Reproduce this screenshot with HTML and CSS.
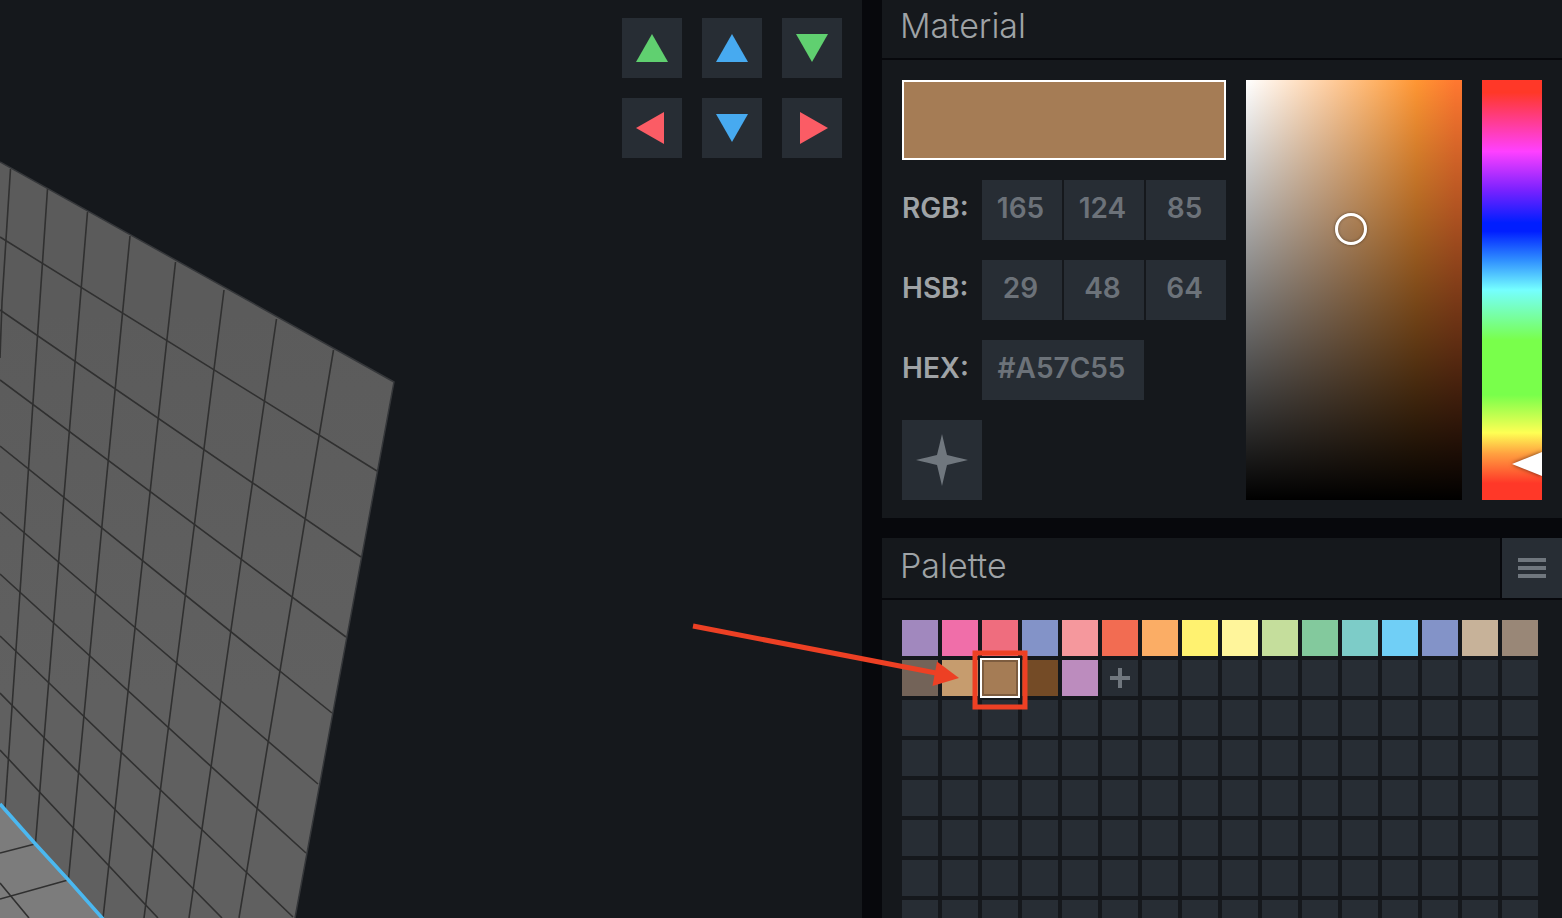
FILE: index.html
```html
<!DOCTYPE html>
<html lang="en">
<head>
<meta charset="utf-8">
<meta name="viewport" content="width=device-width, initial-scale=1">
<title>Voxel editor</title>
<link rel="stylesheet" href="styles.css">
</head>
<body>
<div class="app">
  <main class="viewport">
    <svg class="scene" viewBox="0 0 862 918" preserveAspectRatio="xMinYMin slice" aria-hidden="true">
      <defs>
        <linearGradient id="wall" x1="0" y1="0" x2="0" y2="1">
          <stop offset="0.2" stop-color="#5b5b5b"/>
          <stop offset="0.7" stop-color="#606060"/>
        </linearGradient>
      </defs>
      <path fill="url(#wall)" d="M0 162 394 382 295 918H0Z"/>
      <path fill="#7c7c7c" d="M0 805 102 918H0Z"/>
      <g class="grid-lines">
        <path d="M10.500 169 2 302 0 358M47.500 189 25 520 5 808M87.500 212 62 520 35.500 843M130 236 102.500 520 68.500 879M175.500 262 147 520 103 918M224 290 195 520 144 918M276.500 319 247 520 189 918M333.500 350 305 520 239 918"/>
        <path d="M0 237 377 471M0 310 361 557M0 380 346 637M0 446 332 713M0 512 318 784M0 574 306 853M0 636 293 917M0 693 222 918M0 750 158 918"/>
        <path d="M0 853 35 844M0 899 68 880M0 883 29 918"/>
      </g>
      <path class="wall-edge" d="M0 162 394 382 295 918"/>
      <path class="axis-line" d="M0 804 35 843.500 68 879.500 103 919"/>
    </svg>
    <nav class="move-pad" aria-label="Move model">
      <button class="tile" type="button" aria-label="Up"><svg viewBox="0 0 60 60"><path fill="#60d070" d="M30 16 46 44H14Z"/></svg></button>
      <button class="tile" type="button" aria-label="Back"><svg viewBox="0 0 60 60"><path fill="#47aaf0" d="M30 16 46 44H14Z"/></svg></button>
      <button class="tile" type="button" aria-label="Down"><svg viewBox="0 0 60 60"><path fill="#60d070" d="M30 44 46 16H14Z"/></svg></button>
      <button class="tile" type="button" aria-label="Left"><svg viewBox="0 0 60 60"><path fill="#fb5c65" d="M14 30 42 14V46Z"/></svg></button>
      <button class="tile" type="button" aria-label="Forward"><svg viewBox="0 0 60 60"><path fill="#47aaf0" d="M30 44 46 16H14Z"/></svg></button>
      <button class="tile" type="button" aria-label="Right"><svg viewBox="0 0 60 60"><path fill="#fb5c65" d="M46 30 18 14V46Z"/></svg></button>
    </nav>
  </main>

  <aside class="sidebar">
    <section class="panel">
      <header class="panel-head"><h2>Material</h2></header>
      <div class="material">
        <div class="fields">
          <div class="preview"></div>
          <div class="row">
            <label for="r">RGB:</label>
            <input id="r" value="165"><input aria-label="Green" value="124"><input aria-label="Blue" value="85">
          </div>
          <div class="row">
            <label for="h">HSB:</label>
            <input id="h" value="29"><input aria-label="Saturation" value="48"><input aria-label="Brightness" value="64">
          </div>
          <div class="row">
            <label for="hex">HEX:</label>
            <input id="hex" class="wide" value="#A57C55">
          </div>
          <button class="tile large" type="button" aria-label="Material effect"><svg viewBox="0 0 80 80"><path fill="#70777e" d="M40 14Q43 27 45 35Q53 37 66 40Q53 43 45 45Q43 53 40 66Q37 53 35 45Q27 43 14 40Q27 37 35 35Q37 27 40 14Z"/></svg></button>
        </div>
        <div class="shade"><span class="ring"></span></div>
        <div class="hue">
          <input type="range" min="0" max="360" value="29" aria-label="Hue">
          <svg class="hue-mark" viewBox="0 0 32 24" aria-hidden="true"><path d="M2 12 32 0V24Z"/></svg>
        </div>
      </div>
    </section>

    <section class="panel palette-panel">
      <header class="panel-head">
        <h2>Palette</h2>
        <button class="tile menu" type="button" aria-label="Palette menu"><svg viewBox="0 0 60 60"><path fill="#70777e" d="M16 20H44V24H16ZM16 28H44V32H16ZM16 36H44V40H16Z"/></svg></button>
      </header>
      <div class="palette">
        <div class="swatches" id="swatches"></div>
        <svg class="callout" width="680" height="318" viewBox="0 0 680 318" aria-hidden="true">
          <path class="callout-line" d="M-189 26 54 73"/>
          <path class="callout-line" d="M93 53H143V107H93Z"/>
          <path class="callout-head" d="M77 78 55 61.500 50.500 86Z"/>
        </svg>
      </div>
    </section>
  </aside>
</div>
<script src="palette.js"></script>
</body>
</html>
```
FILE: styles.css
```css
* { box-sizing: border-box; }

body {
  margin: 0;
  background: #07080c;
  color: #9fa3a6;
  font-family: Inter, "Liberation Sans", sans-serif;
}

button, input {
  margin: 0;
  border: 0;
  border-radius: 0;
  padding: 0;
  font: inherit;
}

.app {
  display: grid;
  grid-template-columns: minmax(0, 1fr) 680px;
  grid-template-rows: minmax(0, 1fr);
  gap: 20px;
  height: 100vh;
  overflow: hidden;
}

.viewport {
  position: relative;
  display: flex;
  justify-content: flex-end;
  align-items: flex-start;
  padding: 18px 20px;
  background: #15181c;
}

.scene {
  position: absolute;
  inset: 0;
  width: 100%;
  height: 100%;
}

.grid-lines path {
  fill: none;
  stroke: #303030;
  stroke-width: 1.6;
}

.wall-edge {
  fill: none;
  stroke: #35373a;
  stroke-width: 1.5;
}

.axis-line {
  fill: none;
  stroke: #4bb8f0;
  stroke-width: 3.5;
}

.move-pad {
  position: relative;
  display: grid;
  grid-template-columns: repeat(3, 60px);
  gap: 20px;
}

.tile {
  display: block;
  width: 60px;
  height: 60px;
  background: #272d34;
}

.tile svg {
  display: block;
  width: 100%;
  height: 100%;
}

.tile.large {
  width: 80px;
  height: 80px;
}

.sidebar {
  display: flex;
  flex-direction: column;
  gap: 20px;
  min-width: 0;
  margin-top: -2px;
}

.panel { background: #15181c; }

.palette-panel {
  flex: 1 0 auto;
}

.panel-head {
  display: flex;
  justify-content: space-between;
  height: 62px;
  padding-left: 18px;
  border-bottom: 2px solid #07080c;
}

.panel-head h2 {
  margin: 0;
  font-size: 34px;
  font-weight: 300;
  line-height: 56px;
}

.menu {
  width: 62px;
  border-left: 2px solid #07080c;
}

.material {
  display: grid;
  grid-template-columns: 324px minmax(0, 1fr) 60px;
  gap: 20px;
  padding: 20px 20px 18px;
}

.fields {
  display: flex;
  flex-direction: column;
  gap: 20px;
}

.preview {
  height: 80px;
  border: 2px solid #fff;
  background: #a57c55;
}

.row {
  display: grid;
  grid-template-columns: 78px repeat(3, 80px);
  gap: 2px;
  font-size: 28px;
  font-weight: 600;
}

.row label {
  line-height: 56px;
}

.row input {
  width: 100%;
  height: 60px;
  padding: 0 3px 4px 0;
  background: #272d34;
  color: #6c7279;
  text-align: center;
}

.row .wide { grid-column: span 2; }

.shade {
  position: relative;
  background:
    linear-gradient(to bottom, transparent, #000),
    linear-gradient(to right, #fff 0%, #ffcea0 38%, #ffb266 60%, #ff9633 79%, #ff7830 97%);
}

.ring {
  position: absolute;
  left: 48.6%;
  top: 35.5%;
  width: 32px;
  height: 32px;
  margin: -16px;
  border: 3px solid #fff;
  border-radius: 50%;
  box-shadow: 0 0 3px rgba(0, 0, 0, .5), inset 0 0 3px rgba(0, 0, 0, .4);
}

.hue {
  position: relative;
  overflow: hidden;
  background: linear-gradient(to bottom,
    #ff3828 0%, #ff3828 3%, #ff40ff 17%, #7d22ff 26%, #001eff 34%, #001eff 36%,
    #3090ff 43%, #75ffff 50%, #79ff4b 62%, #79ff4b 75%, #feff54 84%,
    #ffa040 89%, #ff3828 96%);
}

.hue input {
  position: absolute;
  inset: 0;
  width: 100%;
  height: 100%;
  appearance: none;
  background: transparent;
  writing-mode: vertical-lr;
  direction: rtl;
}

.hue input::-webkit-slider-thumb {
  appearance: none;
  width: 60px;
  height: 24px;
  background: transparent;
}

.hue-mark {
  position: absolute;
  right: 0;
  top: 91.4%;
  width: 32px;
  height: 24px;
  margin-top: -12px;
  overflow: visible;
  fill: #fff;
  filter: drop-shadow(0 0 2px rgba(0, 0, 0, .6));
  pointer-events: none;
}

.palette {
  position: relative;
  padding: 20px;
}

.swatches {
  display: grid;
  grid-template-columns: repeat(16, 36px);
  grid-auto-rows: 36px;
  gap: 4px;
}

.swatch { background: #272d34; }

.swatch svg {
  display: block;
  width: 36px;
  height: 36px;
}

.swatch.selected {
  box-shadow: 0 0 0 2px #fff, inset 0 0 0 2px #7d5c3f;
}

.callout {
  position: absolute;
  left: 0;
  top: 0;
  overflow: visible;
  pointer-events: none;
}

.callout-line {
  fill: none;
  stroke: #ed4024;
  stroke-width: 5;
}

.callout-head { fill: #ed4024; }
```
FILE: palette.js
```js
const colors = [
  '#a188be', '#f06ea9', '#ef6d7e', '#8393c8', '#f5989d', '#f26c52', '#fbad65', '#fff270',
  '#fff59b', '#c5de9c', '#83c99d', '#7dccc8', '#70cff6', '#8393c8', '#c7b299', '#998777',
  '#736358', '#c69c6e', '#a57c55', '#744b26', '#bc8cbe'
];
const selected = 18;
const slots = 16 * 8;
const grid = document.getElementById('swatches');

for (let i = 0; i < slots; i++) {
  const b = document.createElement('button');
  b.type = 'button';
  b.className = 'swatch';
  b.setAttribute('aria-label', colors[i] || (i === colors.length ? 'Add color' : 'Empty slot'));
  if (colors[i]) b.style.background = colors[i];
  if (i === selected) b.classList.add('selected');
  if (i === colors.length) {
    b.innerHTML = '<svg viewBox="0 0 36 36"><path fill="#70777e" d="M16 8H20V16H28V20H20V28H16V20H8V16H16Z"/></svg>';
  }
  grid.append(b);
}
```
